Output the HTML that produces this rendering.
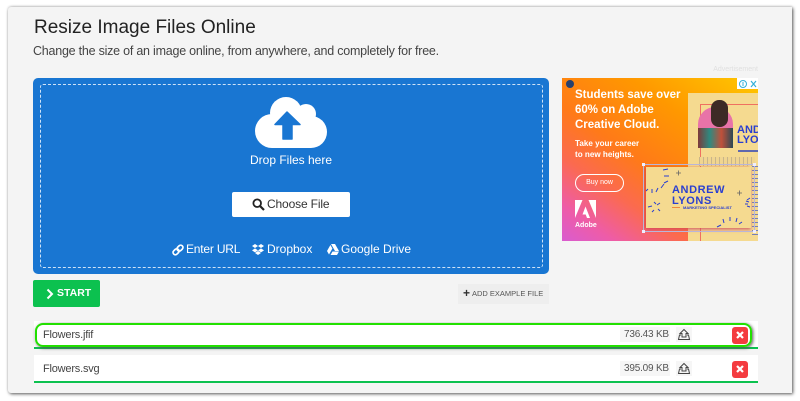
<!DOCTYPE html>
<html><head><meta charset="utf-8"><style>
html,body{margin:0;padding:0;background:#fff}
body{width:800px;height:401px;position:relative;overflow:hidden;font-family:"Liberation Sans",sans-serif}
.a{position:absolute;white-space:nowrap}
svg{position:absolute;overflow:visible}
</style></head><body>
<div class="a" style="left:8px;top:7px;width:784px;height:386px;background:#f4f4f4;border-radius:3px 0 0 3px;box-shadow:1px 1px 3px #555,0 -1px 2px #e4e4e4"></div>
<div class="a" style="left:34px;top:16px;font-size:19px;line-height:24px;color:#222">Resize Image Files Online</div>
<div class="a" style="left:33px;top:43px;font-size:12.5px;letter-spacing:-.23px;line-height:17px;color:#444">Change the size of an image online, from anywhere, and completely for free.</div>

<div class="a" style="left:33px;top:78px;width:516px;height:196px;background:#1976d2;border-radius:5px"></div>
<div class="a" style="left:40px;top:84px;width:501px;height:182px;border:1px dashed #cfe3f7;border-radius:3px"></div>
<svg style="left:255px;top:97px" width="73" height="51" viewBox="0 0 73 51">
<g fill="#fff"><circle cx="17" cy="34" r="17"/><circle cx="31" cy="16" r="16"/><circle cx="51" cy="17" r="10"/><circle cx="56" cy="35" r="16"/><rect x="17" y="20" width="39" height="31"/></g>
<path fill="#1976d2" stroke="#1976d2" stroke-width="1.500" stroke-linejoin="round" d="M32 15L20 27.500H28V42H37V27.500H45Z"/>
</svg>
<div class="a" style="left:204px;width:174px;text-align:center;top:152px;font-size:12px;line-height:16px;color:#fff">Drop Files here</div>
<div class="a" style="left:232px;top:192px;width:118px;height:25px;background:#fff;border-radius:2px"></div>
<svg style="left:252px;top:198px" width="13" height="13" viewBox="0 0 13 13"><circle cx="5.200" cy="5.200" r="3.800" fill="none" stroke="#222" stroke-width="1.800"/><path d="M8 8l4 4" stroke="#222" stroke-width="2.200"/></svg>
<div class="a" style="left:267px;top:196px;font-size:12px;letter-spacing:-.15px;line-height:16px;color:#333">Choose File</div>

<svg style="left:172px;top:244px" width="12" height="12" viewBox="0 0 12 12"><g fill="none" stroke="#fff" stroke-width="1.700"><rect x="0.800" y="5.500" width="6.500" height="4.600" rx="2.300" transform="rotate(-45 4 7.800)"/><rect x="4.700" y="1.800" width="6.500" height="4.600" rx="2.300" transform="rotate(-45 8 4.100)"/></g></svg>
<div class="a" style="left:186px;top:241px;font-size:12px;letter-spacing:-.2px;line-height:16px;color:#fff">Enter URL</div>
<svg style="left:252px;top:244px" width="12" height="11" viewBox="0 0 12 11"><path fill="#fff" d="M3 0l3 2-3 2-3-2zM9 0l3 2-3 2-3-2zM3 4.400l3 2-3 2-3-2zM9 4.400l3 2-3 2-3-2zM3 9l3-2 3 2-3 2z"/></svg>
<div class="a" style="left:267px;top:241px;font-size:12px;line-height:16px;color:#fff">Dropbox</div>
<svg style="left:327px;top:244px" width="12" height="11" viewBox="0 0 12 11"><path fill="#fff" d="M4 0h4l4 7H8zM3.400 1l2 3.500L2 10.500 0 7zM3.500 11l2-3.500H12L10 11z"/></svg>
<div class="a" style="left:341px;top:241px;font-size:12px;line-height:16px;color:#fff">Google Drive</div>

<div class="a" style="left:33px;top:280px;width:67px;height:27px;background:#0cc14f;border-radius:2px"></div>
<svg style="left:46px;top:289px" width="8" height="10" viewBox="0 0 8 10"><path d="M1.500 0.500L6 5 1.500 9.500" fill="none" stroke="#fff" stroke-width="2"/></svg>
<div class="a" style="left:57px;top:286px;font-size:10.500px;line-height:15px;font-weight:bold;color:#fff">START</div>
<div class="a" style="left:458px;top:284px;width:91px;height:20px;background:#eee"></div>
<div class="a" style="left:463px;top:287px;font-size:12px;line-height:13px;font-weight:bold;color:#333">+</div>
<div class="a" style="left:472px;top:288px;font-size:7.500px;line-height:11px;color:#555">ADD EXAMPLE FILE</div>

<div class="a" style="left:34px;top:321px;width:724px;height:26px;background:#fff;border-bottom:2px solid #0cc14f"></div>
<div class="a" style="left:34px;top:355px;width:724px;height:26px;background:#fff;border-bottom:2px solid #0cc14f"></div>
<div class="a" style="left:35px;top:323px;width:713px;height:20px;border:2px solid #22e000;border-radius:8px;box-shadow:1px 1px 3px #555"></div>
<div class="a" style="left:43px;top:328px;font-size:11px;letter-spacing:-.2px;line-height:15px;color:#444">Flowers.jfif</div>
<div class="a" style="left:43px;top:362px;font-size:11px;letter-spacing:-.2px;line-height:15px;color:#444">Flowers.svg</div>
<div class="a" style="left:620px;top:327px;width:50px;height:15px;background:#f6f6f6"></div>
<div class="a" style="left:620px;top:361px;width:50px;height:15px;background:#f6f6f6"></div>
<div class="a" style="left:624px;top:327px;font-size:10px;letter-spacing:-.2px;line-height:15px;color:#555">736.43 KB</div>
<div class="a" style="left:624px;top:361px;font-size:10px;letter-spacing:-.2px;line-height:15px;color:#555">395.09 KB</div>
<div class="a" style="left:676px;top:327px;width:16px;height:15px;background:#f6f6f6"></div>
<div class="a" style="left:676px;top:361px;width:16px;height:15px;background:#f6f6f6"></div>
<svg style="left:678px;top:329px" width="12" height="11" viewBox="0 0 12 11"><g fill="none" stroke="#444" stroke-width="1"><path d="M6 .5L10 4.500H8V8H4V4.500H2Z"/><path d="M3 6H1.500L.5 10.500h11L10.500 6H9"/></g></svg>
<svg style="left:678px;top:363px" width="12" height="11" viewBox="0 0 12 11"><g fill="none" stroke="#444" stroke-width="1"><path d="M6 .5L10 4.500H8V8H4V4.500H2Z"/><path d="M3 6H1.500L.5 10.500h11L10.500 6H9"/></g></svg>
<div class="a" style="left:732px;top:327px;width:16px;height:17px;background:#f43c40;border-radius:3px"></div>
<div class="a" style="left:732px;top:361px;width:16px;height:17px;background:#f43c40;border-radius:3px"></div>
<svg style="left:736px;top:331px" width="8" height="8"><path d="M1 1l6 6M7 1L1 7" stroke="#fff" stroke-width="2.200"/></svg>
<svg style="left:736px;top:365px" width="8" height="8"><path d="M1 1l6 6M7 1L1 7" stroke="#fff" stroke-width="2.200"/></svg>

<div class="a" style="right:42px;top:65px;font-size:7px;line-height:10px;color:#e0e0e0">Advertisement</div>
<div class="a" style="left:562px;top:78px;width:196px;height:163px;overflow:hidden;background:linear-gradient(215deg,#ffc800 0%,#ff9800 30%,#ff7a18 55%,#fb6a50 72%,#ee5ca8 88%,#d95cd0 100%)">
 <div class="a" style="left:126px;top:15px;width:70px;height:148px;background:#f5da90"></div>
 <div class="a" style="left:138px;top:26px;width:58px;height:137px;border-left:1px solid #ef7060;border-top:1px solid #ef7060"></div>
 <div class="a" style="left:136px;top:29px;width:35px;height:41px;background:#e873a8;border-radius:17px 17px 0 0"></div>
 <div class="a" style="left:136px;top:50px;width:35px;height:20px;background:linear-gradient(90deg,#7d3a3a,#2e8a80,#c0503a,#2b4a55)"></div>
 <div class="a" style="left:149px;top:22px;width:17px;height:27px;background:#3d2a26;border-radius:8px"></div>
 <div class="a" style="left:175px;top:47px;font-size:11px;line-height:10px;font-weight:bold;color:#2a3fd0">AND<br>LYO</div>
 <div class="a" style="left:137px;top:79px;width:56px;height:9px;background:repeating-linear-gradient(90deg,#c9b58a 0 1px,#f0d590 1px 4px)"></div>
 <div class="a" style="left:176px;top:72px;width:20px;height:2px;background:#3a4bb5;opacity:.8"></div>
 <div class="a" style="left:190px;top:88px;width:6px;height:70px;background:repeating-linear-gradient(180deg,#7680b8 0 1px,transparent 1px 4px)"></div>
 <div class="a" style="left:84px;top:89px;width:105px;height:61px;background:#f5da90;box-shadow:-2px 0 2px rgba(220,70,60,.55),0 2px 3px rgba(200,70,110,.6)"></div>
 <div class="a" style="left:81px;top:86px;width:112px;height:68px;border:1px solid #b9b6d9;box-sizing:border-box"></div>
 <div class="a" style="left:80px;top:85px;width:3px;height:3px;background:#eef"></div>
 <div class="a" style="left:80px;top:152px;width:3px;height:3px;background:#eef"></div>
 <div class="a" style="left:191px;top:85px;width:3px;height:3px;background:#eef"></div>
 <div class="a" style="left:191px;top:152px;width:3px;height:3px;background:#eef"></div>
 <div class="a" style="left:110px;top:107px;font-size:11px;line-height:10.500px;font-weight:bold;letter-spacing:.6px;color:#2a3fd0">ANDREW<br>LYONS</div>
 <div class="a" style="left:121px;top:127px;font-size:4px;line-height:5px;font-weight:bold;color:#2a3fd0">MARKETING SPECIALIST</div>
 <div class="a" style="left:110px;top:129px;width:8px;height:1px;background:#ef8a3c"></div>
 <svg style="left:84px;top:89px" width="113" height="61"><path d="M17 3l5-1M18 9h5M18 16l4-2M15 21l3-4M10 25l2-4M6 26v-4M0 24l2-2M8 35l2 2M14 36l-3 2M2 40l4-1M6 45l2-2M12 42l2 2M71 60l4-2M77 52l1 4M84 50v4M91 51l-1 4M96 55l-3 2M104 31l-3 2M100 34l3 1M99 37h3M104 40l-3-1" stroke="#2a3fd0" stroke-width="1" fill="none"/><path d="M30 6h5M32.500 3.500v5M91 26h5M93.500 23.500v5" stroke="#666" stroke-width=".8" fill="none"/></svg>
 <div class="a" style="left:13px;top:9.500px;font-size:11.500px;line-height:15px;font-weight:bold;color:#fff">Students save over<br>60% on Adobe<br>Creative Cloud.</div>
 <div class="a" style="left:13px;top:59.500px;font-size:8.100px;line-height:11px;font-weight:bold;color:#fff">Take your career<br>to new heights.</div>
 <div class="a" style="left:13px;top:96px;width:47px;height:16px;border:1px solid #fff;border-radius:9px;font-size:7px;line-height:16px;text-align:center;color:#fff">Buy now</div>
 <svg style="left:13px;top:122px" width="21" height="18" viewBox="0 0 21 18"><path fill="#fff" d="M0 0h7.500L0 18zM21 0h-7.500L21 18zM10.500 6.500L15 18h-3l-1.300-3.500H7.500z"/></svg>
 <div class="a" style="left:13px;top:143px;font-size:7px;line-height:10px;font-weight:bold;color:#fff">Adobe</div>
 <div class="a" style="left:4px;top:2px;width:8px;height:8px;background:#27406e;border-radius:50%"></div>
 <div class="a" style="left:175px;top:0;width:21px;height:11px;background:#fff"></div>
 <svg style="left:176px;top:1px" width="20" height="10"><circle cx="5" cy="5" r="3.500" fill="none" stroke="#35b0d8"/><path d="M5 3v4" stroke="#35b0d8"/><path d="M13 2l5 6M18 2l-5 6" stroke="#35b0d8" stroke-width="1.200"/></svg>
</div>
</body></html>
